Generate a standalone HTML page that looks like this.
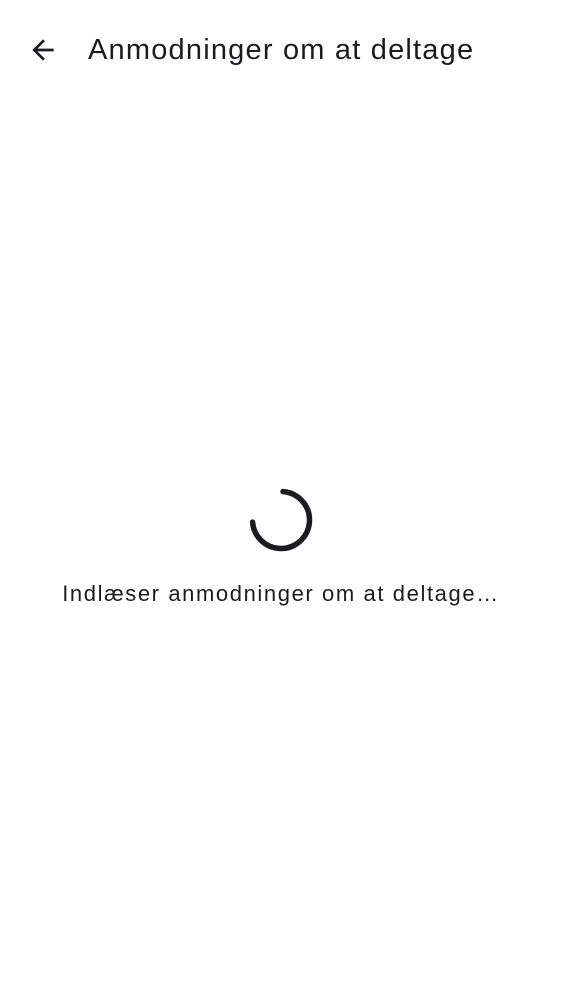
<!DOCTYPE html>
<html><head><style>
body{margin:0;width:562px;height:1000px;background:#fff;font-family:"Liberation Sans",sans-serif;color:#1d1b20;position:relative;overflow:hidden}
.t{position:absolute;left:88px;top:32px;font-size:29px;line-height:36px;letter-spacing:1.2px;white-space:nowrap}
.b{position:absolute;left:0;width:562px;text-align:center;top:579px;font-size:22px;line-height:30px;letter-spacing:1.6px;white-space:nowrap}
svg{position:absolute}
</style></head><body>
<svg style="left:27px;top:34px" width="32" height="32" viewBox="0 0 24 24"><path d="M20 11H7.83l5.59-5.59L12 4l-8 8 8 8 1.41-1.41L7.83 13H20v-2z" fill="#1d1b20"/></svg>
<div class="t">Anmodninger om at deltage</div>
<svg style="left:247px;top:486px" width="68" height="68" viewBox="0 0 68 68"><circle cx="34" cy="34" r="28.5" fill="none" stroke="#1d1b20" stroke-width="5.5" stroke-linecap="round" stroke-dasharray="130 200" transform="rotate(-86 34 34)"/></svg>
<div class="b">Indlæser anmodninger om at deltage…</div>
</body></html>
